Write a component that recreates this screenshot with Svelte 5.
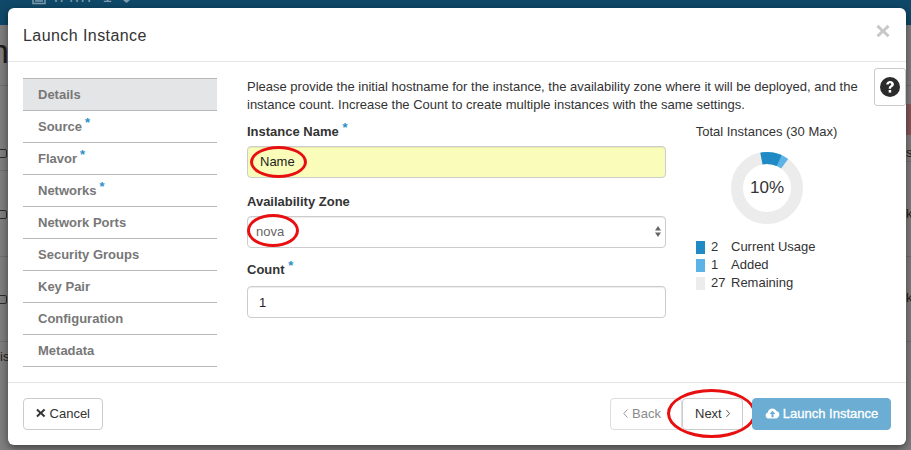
<script>
  const steps = [
    { label: 'Details', active: true },
    { label: 'Source', req: true },
    { label: 'Flavor', req: true },
    { label: 'Networks', req: true },
    { label: 'Network Ports' },
    { label: 'Security Groups' },
    { label: 'Key Pair' },
    { label: 'Configuration' },
    { label: 'Metadata' }
  ];
  const legend = [
    { n: '2', t: 'Current Usage', c: '#1f8ac4' },
    { n: '1', t: 'Added', c: '#5cb4e6' },
    { n: '27', t: 'Remaining', c: '#ececec' }
  ];
  const lines = [
    { side: 'l', y: 85 }, { side: 'l', y: 170 }, { side: 'l', y: 256 }, { side: 'l', y: 341 },
    { side: 'r', y: 85 }, { side: 'r', y: 161 }, { side: 'r', y: 256 }, { side: 'r', y: 341 }
  ];
  const boxes = [149, 210, 295];
</script>

<div class="page">
  <div class="topbar">
    <span class="crumb">
      <svg width="14" height="5" viewBox="0 0 14 5"><path d="M1 -3V3.500H13V-3M3 1H11" fill="none" stroke="#7f9db0" stroke-width="1.500"/></svg>
      <span class="crumb-text">n4n7-1</span>
      <svg class="crumb-caret" width="7" height="4" viewBox="0 0 7 4"><path d="M0 0H7L3.500 3Z" fill="#7f9db0"/></svg>
    </span>
  </div>

  <div class="behind" aria-hidden="true">
    {#each lines as l}
      <i class="rule {l.side}" style="top:{l.y}px"></i>
    {/each}
    {#each boxes as y}
      <i class="box" style="top:{y}px"></i>
    {/each}
    <i class="redbar"></i>
    <span class="ghost big">n</span>
    <span class="ghost is">is</span>
    <span class="ghost s">s</span>
    <span class="ghost k1">k</span>
    <span class="ghost k2">k</span>
  </div>

  <div class="modal">
    <header class="head">
      <h1>Launch Instance</h1>
      <svg class="close" width="14" height="14" viewBox="0 0 14 14"><path d="M2.500 0.800 7 5.200 11.500 0.800 13.600 2.900 9.200 7 13.600 11.200 11.500 13.200 7 8.900 2.500 13.200 0.400 11.200 4.800 7 0.400 2.900Z" fill="#c8c8c8"/></svg>
    </header>

    <div class="body">
      <button class="help" aria-label="Help">
        <svg width="20" height="20" viewBox="0 0 20 20">
          <circle cx="10" cy="10" r="10" fill="#2b2b2b"/>
          <path d="M6.200 7.600C6.400 5.200 8 4 10.100 4c2.200 0 3.800 1.300 3.800 3.200 0 1.500-.8 2.200-1.800 2.900-.8.500-1 .8-1 1.600H8.700c0-1.500.4-2.200 1.400-2.900.8-.5 1.200-.9 1.200-1.500 0-.7-.5-1.100-1.200-1.100-.8 0-1.300.5-1.400 1.400Z" fill="#fff"/>
          <rect x="8.700" y="13" width="2.500" height="2.600" fill="#fff"/>
        </svg>
      </button>

      <nav class="steps">
        {#each steps as s}
          <div class="step" class:active={s.active}>{s.label}{#if s.req}<span class="star side">*</span>{/if}</div>
        {/each}
      </nav>

      <section class="content">
        <p class="intro">Please provide the initial hostname for the instance, the availability zone where it will be deployed, and the instance count. Increase the Count to create multiple instances with the same settings.</p>
        <div class="columns">
          <div class="form">
            <div class="label lab-first">Instance Name <span class="star">*</span></div>
            <div class="field yellow"><span class="name">Name</span><i class="ring ring-name"></i></div>
            <div class="label lab-az">Availability Zone</div>
            <div class="field select">
              <span class="nova">nova</span><i class="ring ring-nova"></i>
              <svg class="updown" width="6" height="11" viewBox="0 0 6 11"><path d="M3 0 6 4.500H0ZM0 6.500H6L3 11Z" fill="#666"/></svg>
            </div>
            <div class="label lab-count">Count <span class="star">*</span></div>
            <div class="field count"><span class="name">1</span></div>
          </div>
          <aside class="chart">
            <div class="chart-title">Total Instances (30 Max)</div>
            <div class="donut">
              <svg width="72" height="72" viewBox="0 0 72 72">
                <circle cx="36" cy="36" r="30" fill="none" stroke="#ececec" stroke-width="12"/>
                <circle cx="36" cy="36" r="30" fill="none" stroke="#5cb4e6" stroke-width="12" stroke-dasharray="18.85 170" transform="rotate(-90 36 36)"/>
                <circle cx="36" cy="36" r="30" fill="none" stroke="#1f8ac4" stroke-width="12" stroke-dasharray="12.57 170" transform="rotate(-90 36 36)"/>
              </svg>
              <span class="pct">10%</span>
            </div>
            <ul class="legend">
              {#each legend as l}
                <li><i class="swatch" style="background:{l.c}"></i><span class="num">{l.n}</span><span>{l.t}</span></li>
              {/each}
            </ul>
          </aside>
        </div>
      </section>
    </div>

    <footer class="foot">
      <button class="btn cancel">
        <svg width="10" height="10" viewBox="0 0 14 14"><path d="M2.500 0.800 7 5.200 11.500 0.800 13.600 2.900 9.200 7 13.600 11.200 11.500 13.200 7 8.900 2.500 13.200 0.400 11.200 4.800 7 0.400 2.900Z" fill="#333"/></svg>
        Cancel
      </button>
      <div class="actions">
        <button class="btn back">
          <svg width="5" height="9" viewBox="0 0 5 9"><path d="M4.500 .5 .8 4.500 4.500 8.500" fill="none" stroke="#999" stroke-width="1"/></svg>
          Back
        </button>
        <button class="btn next">
          Next
          <svg width="5" height="9" viewBox="0 0 5 9"><path d="M.5 .5 4.200 4.500 .5 8.500" fill="none" stroke="#333" stroke-width="1"/></svg>
          <i class="ring ring-next"></i>
        </button>
        <button class="btn launch">
          <svg width="15" height="11" viewBox="0 0 15 12"><path d="M3.600 11.500C1.600 11.500 0 10 0 8.100c0-1.500 1-2.800 2.400-3.200C2.600 2.600 4.600.5 7.300.5c2 0 3.700 1.100 4.500 2.800 1.800.3 3.200 1.800 3.200 3.800 0 2.400-1.900 4.400-4.300 4.400Z" fill="#fff"/><path d="M7.500 3 4.300 6.500h2.100V10h2.200V6.500h2.100Z" fill="#6badd3"/></svg>
          <span class="launch-text">Launch Instance</span>
        </button>
      </div>
    </footer>
  </div>
</div>

<style>
  :global(body) { margin: 0; }
  .page {
    position: relative;
    width: 911px;
    height: 450px;
    overflow: hidden;
    background: #7f7f7f;
    font-family: "Liberation Sans", Arial, sans-serif;
    font-size: 13px;
    color: #333;
  }
  .topbar {
    height: 25px;
    background: #0f4868;
    color: #7f9db0;
    padding-left: 32px;
    overflow: hidden;
  }
  .crumb { display: flex; align-items: flex-start; }
  .crumb-text {
    font-size: 17px;
    line-height: 14px;
    margin: -10px 0 0 8px;
    letter-spacing: 1px;
  }
  .crumb-caret { margin-left: 10px; }

  .behind { position: absolute; inset: 0; }
  .rule { position: absolute; height: 1px; background: #6f6f6f; }
  .rule.l { left: 0; width: 10px; }
  .rule.r { right: 0; width: 8px; }
  .box {
    position: absolute;
    left: -6px;
    width: 13px;
    height: 9px;
    box-sizing: border-box;
    border: 1px solid #2c2c2c;
    border-radius: 2px;
  }
  .redbar { position: absolute; right: 0; top: 104px; width: 8px; height: 31px; background: #85585a; }
  .ghost { position: absolute; color: #1e1e1e; line-height: 16px; }
  .big { left: -10px; top: 36px; font-size: 34px; line-height: 30px; }
  .is { left: 0; top: 349px; }
  .s { left: 906px; top: 145px; }
  .k1 { left: 906px; top: 206px; }
  .k2 { left: 906px; top: 290px; }

  .modal {
    position: absolute;
    left: 8px;
    top: 8px;
    width: 898px;
    height: 437px;
    background: #fff;
    border-radius: 6px;
    box-shadow: 0 3px 9px rgba(0,0,0,.5);
    display: flex;
    flex-direction: column;
  }
  .head {
    height: 54px;
    box-sizing: border-box;
    border-bottom: 1px solid #e5e5e5;
    padding: 0 15px;
    display: flex;
    justify-content: space-between;
    align-items: center;
  }
  h1 { margin: 2px 0 0; font-size: 16px; font-weight: 400; color: #333; letter-spacing: .43px; }
  .close { margin-right: 1px; margin-bottom: 8px; }
  .body { position: relative; flex: 1; display: flex; padding: 16px 15px 0; }
  .help {
    position: absolute;
    right: 0;
    top: 6px;
    width: 32px;
    height: 38px;
    box-sizing: border-box;
    background: #fff;
    border: 1px solid #ccc;
    border-radius: 3px;
    padding: 0;
    display: flex;
    align-items: center;
    justify-content: center;
  }
  .steps { width: 194px; flex: none; border-top: 1px solid #b8b8b8; }
  .step {
    height: 32px;
    box-sizing: border-box;
    border-bottom: 1px solid #b8b8b8;
    padding: 0 15px;
    line-height: 31px;
    font-size: 13px;
    font-weight: 700;
    color: #777;
  }
  .step.active { background: #e4e5e7; }
  .star { color: #2b8fc9; font-weight: 700; position: relative; top: -4px; font-size: 13px; }
  .star.side { margin-left: 3px; }
  .content { margin-left: 30px; width: 612px; }
  .intro { margin: 0; font-size: 13px; line-height: 18px; color: #333; }
  .columns { display: flex; }
  .form { width: 419px; }
  .label { font-weight: 700; font-size: 13px; line-height: 18px; margin: 14px 0 5px; color: #333; }
  .label.lab-first { margin-top: 9px; }
  .label.lab-az { margin-top: 15px; }
  .label.lab-count { margin: 13px 0 7px; }
  .field {
    position: relative;
    height: 32px;
    box-sizing: border-box;
    border: 1px solid #ccc;
    border-radius: 4px;
    padding: 0 12px;
    line-height: 30px;
    background: #fff;
    box-shadow: inset 0 1px 1px rgba(0,0,0,.075);
  }
  .field.count { padding-left: 11px; line-height: 31px; }
  .yellow { background: #fafdb9; }
  .name { color: #222; }
  .nova { color: #666; margin-left: -3px; }
  .select { padding-left: 11px; }
  .updown { position: absolute; right: 4px; top: 9px; }
  .ring {
    position: absolute;
    border: 3px solid #e80f10;
    border-radius: 50%;
    box-sizing: border-box;
    pointer-events: none;
  }
  .ring-name { left: 2px; top: -1px; width: 57px; height: 32px; }
  .ring-nova { left: -1px; top: -3px; width: 52px; height: 33px; }
  .ring-next { left: -16px; top: -10px; width: 89px; height: 49px; }
  .chart { margin-left: 30px; width: 143px; padding-top: 9px; }
  .chart-title { font-size: 13px; line-height: 18px; text-align: center; white-space: nowrap; margin-left: -2px; }
  .donut { position: relative; width: 72px; height: 72px; margin: 11px 0 0 35px; }
  .donut svg { display: block; }
  .pct { position: absolute; inset: 0; display: flex; align-items: center; justify-content: center; font-size: 17px; color: #333; }
  .legend { list-style: none; margin: 14px 0 0; padding: 0; }
  .legend li { display: flex; height: 18px; line-height: 18px; align-items: center; font-size: 13px; }
  .swatch { width: 9px; height: 13px; flex: none; margin-right: 6px; }
  .num { width: 20px; flex: none; }
  .foot {
    height: 63px;
    box-sizing: border-box;
    border-top: 1px solid #e5e5e5;
    padding: 15px;
    display: flex;
    justify-content: space-between;
    align-items: flex-start;
  }
  .actions { display: flex; }
  .btn {
    position: relative;
    height: 32px;
    box-sizing: border-box;
    border: 1px solid #ccc;
    border-radius: 4px;
    background: #fff;
    font: inherit;
    color: #333;
    padding: 0 12px 2px;
    display: inline-flex;
    align-items: center;
    justify-content: center;
    gap: 4px;
    white-space: nowrap;
  }
  .cancel { width: 80px; }
  .back { width: 72px; color: #8a8a8a; border-color: #ddd; justify-content: flex-start; }
  .next { width: 61px; }
  .launch {
    width: 139px;
    margin-left: 9px;
    background: #6badd3;
    border-color: #6badd3;
    color: #fff;
    padding: 0 0 2px;
    gap: 3px;
  }
  .launch-text { -webkit-text-stroke: .3px #fff; }
</style>
